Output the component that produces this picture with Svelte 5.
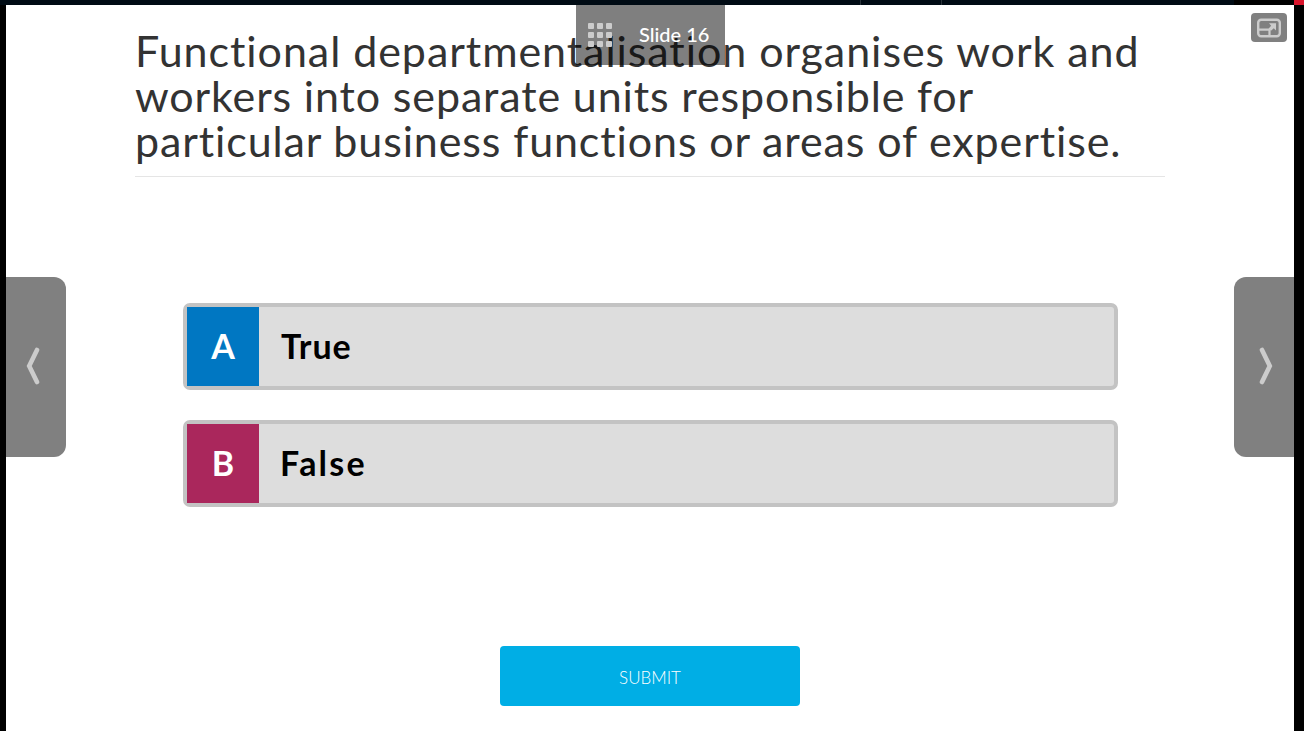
<script>
  const lines = [
    { text: 'Functional departmentalisation organises work and', spacing: 0.94 },
    { text: 'workers into separate units responsible for', spacing: 0.86 },
    { text: 'particular business functions or areas of expertise.', spacing: 0.88 }
  ];
  const answers = [
    { letter: 'A', label: 'True', color: '#0077c2' },
    { letter: 'B', label: 'False', color: '#aa275c' }
  ];
  const dots = Array.from({ length: 9 });
</script>

<div class="window">
  <div class="topbar">
    <span class="tab first"></span>
    <span class="tab"></span>
    <span class="rest"></span>
    <span class="dark"></span>
    <span class="close"></span>
  </div>

  <main class="stage">
    <h1>
      {#each lines as line}
        <span style="letter-spacing: {line.spacing}px">{line.text}</span>
      {/each}
    </h1>

    <div class="answers">
      {#each answers as answer}
        <div class="answer">
          <div class="letter" style="background: {answer.color}"><span>{answer.letter}</span></div>
          <div class="label {answer.label.toLowerCase()}">{answer.label}</div>
        </div>
      {/each}
    </div>

    <button class="submit">SUBMIT</button>

    <div class="menu">
      <div class="grid">
        {#each dots as _}<i></i>{/each}
      </div>
      <span class="slide">Slide 16</span>
    </div>

    <button class="screen" aria-label="Fullscreen">
      <svg width="24" height="20" viewBox="0 0 24 20" fill="none">
        <rect x="1.2" y="1.7" width="21.6" height="16.6" rx="3" stroke="#ccc" stroke-width="2.4" />
        <path d="M2 11.6H12.5V18" stroke="#ccc" stroke-width="2.2" />
        <path d="M12 5.3H19V12.5L16.8 10.3L14 12.8L11.6 10.4L14.2 7.8Z" fill="#ccc" />
      </svg>
    </button>

    <button class="nav prev" aria-label="Previous">
      <svg width="14" height="38" viewBox="0 0 14 38"><path d="M11 3L3.2 19L11 35" /></svg>
    </button>
    <button class="nav next" aria-label="Next">
      <svg width="14" height="38" viewBox="0 0 14 38"><path d="M3 3L10.8 19L3 35" /></svg>
    </button>
  </main>
</div>

<style>
  :global(body) { margin: 0; background: #fff; overflow: hidden; }
  .window {
    width: 1304px;
    height: 731px;
    box-sizing: border-box;
    display: flex;
    flex-direction: column;
    background: #000;
    font-family: Lato, sans-serif;
  }
  .topbar { display: flex; height: 5px; flex: none; background: #000b14; }
  .tab { width: 80px; border-right: 1px solid #29323a; }
  .tab.first { width: 860px; }
  .rest { flex: 1; }
  .dark { width: 60px; background: #000; }
  .close { width: 10px; background: #d9142b; }
  .stage {
    position: relative;
    flex: 1;
    margin: 0 10px 0 6px;
    background: #fff;
    display: flex;
    flex-direction: column;
    align-items: center;
  }
  h1 {
    box-sizing: border-box;
    width: 1030px;
    height: 172px;
    margin: 0;
    padding-top: 23px;
    border-bottom: 1px solid #e5e5e5;
    color: #333;
    font-size: 43px;
    font-weight: 400;
    line-height: 45px;
    font-variant-ligatures: none;
  }
  h1 span { display: block; white-space: nowrap; }
  .answers { display: flex; flex-direction: column; gap: 30px; margin: 126px 0 0 1px; }
  .answer {
    box-sizing: border-box;
    width: 935px;
    height: 87px;
    border: 4px solid #c3c3c3;
    border-radius: 7px;
    background: #ddd;
    display: flex;
  }
  .letter {
    width: 72px;
    height: 79px;
    color: #fff;
    font-size: 34px;
    font-weight: 700;
    line-height: 77px;
    text-align: center;
  }
  .label {
    padding-left: 22px;
    color: #000;
    font-size: 34px;
    font-weight: 700;
    line-height: 77px;
  }
  .true { letter-spacing: 0.9px; }
  .false { padding-left: 21px; letter-spacing: 2.2px; }
  button { border: 0; padding: 0; font-family: inherit; }
  .submit {
    width: 300px;
    height: 60px;
    margin-top: 139px;
    padding-top: 2px;
    border-radius: 4px;
    background: #00aee5;
    color: #fff;
    font-size: 17px;
    font-weight: 300;
  }
  .menu {
    position: absolute;
    top: 0;
    left: 570px;
    width: 149px;
    height: 60px;
    box-sizing: border-box;
    padding-left: 12px;
    display: flex;
    align-items: center;
    gap: 27px;
    background: rgba(0, 0, 0, 0.5);
  }
  .grid { display: grid; grid-template-columns: repeat(3, 6px); grid-auto-rows: 6px; gap: 3px; }
  .grid i { border-radius: 1px; background: #ccc; }
  .slide { color: #fff; font-size: 20px; font-weight: 500; line-height: 58px; height: 60px; white-space: nowrap; }
  .screen {
    position: absolute;
    top: 8px;
    right: 7px;
    width: 36px;
    height: 29px;
    border-radius: 4px;
    background: #808080;
    display: flex;
    align-items: center;
    justify-content: center;
  }
  .nav {
    position: absolute;
    top: 272px;
    width: 60px;
    height: 180px;
    box-sizing: border-box;
    padding-bottom: 2px;
    background: #808080;
    display: flex;
    align-items: center;
  }
  .nav path { fill: none; stroke: #ccc; stroke-width: 4.6; stroke-linecap: round; stroke-linejoin: miter; }
  .prev { left: 0; border-radius: 0 12px 12px 0; padding-left: 20px; }
  .next { right: 0; border-radius: 12px 0 0 12px; padding-left: 25px; }
</style>
